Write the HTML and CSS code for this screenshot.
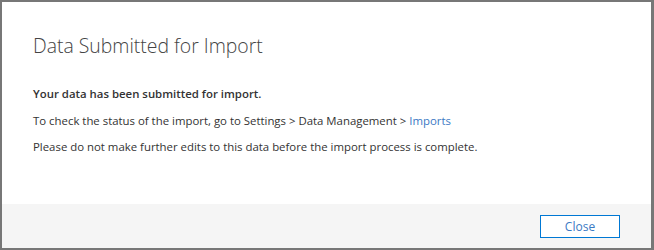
FILE: index.html
```html
<!DOCTYPE html>
<html lang="en">
<head>
    <meta charset="UTF-8">
    <title>Data Submitted for Import</title>
    <link rel="stylesheet" href="styles.css">
</head>
<body>
    <div class="dialog">
        <div class="dialog-body">
            <h1 class="dialog-title">Data Submitted for Import</h1>
            <p class="msg msg-strong">Your data has been submitted for import.</p>
            <p class="msg">To check the status of the import, go to Settings &gt; Data Management &gt; <a href="#" class="link">Imports</a></p>
            <p class="msg">Please do not make further edits to this data before the import process is complete.</p>
        </div>
        <div class="dialog-footer">
            <button class="btn">Close</button>
        </div>
    </div>
</body>
</html>
```

FILE: styles.css
```css
body {
    margin: 0;
    width: 654px;
    height: 250px;
    font-family: "Open Sans", sans-serif;
    background: #7a7a7a;
}

.dialog {
    box-sizing: border-box;
    width: 654px;
    height: 250px;
    border-style: solid;
    border-color: #777;
    border-width: 2px 3px 2px 2px;
    display: flex;
    flex-direction: column;
    background: white;
}

.dialog-body {
    flex: 1;
    padding: 0 31px;
}

.dialog-title {
    margin: 30px 0 25px;
    font-size: 19.4px;
    font-weight: 300;
    color: #444;
    line-height: 28px;
}

.msg {
    margin: 0 0 8.5px;
    font-size: 11.4px;
    line-height: 18px;
    color: #333;
}

.msg-strong {
    font-weight: 600;
}

.link {
    color: #3b79c4;
    text-decoration: none;
}

.dialog-footer {
    height: 44px;
    background: #f5f5f5;
    display: flex;
    justify-content: flex-end;
    align-items: center;
    padding-right: 31px;
}

.btn {
    width: 80px;
    height: 23px;
    border: 1px solid #0078d4;
    background: white;
    color: #3b79c4;
    font-family: inherit;
    font-size: 12px;
    padding: 0;
}
```
